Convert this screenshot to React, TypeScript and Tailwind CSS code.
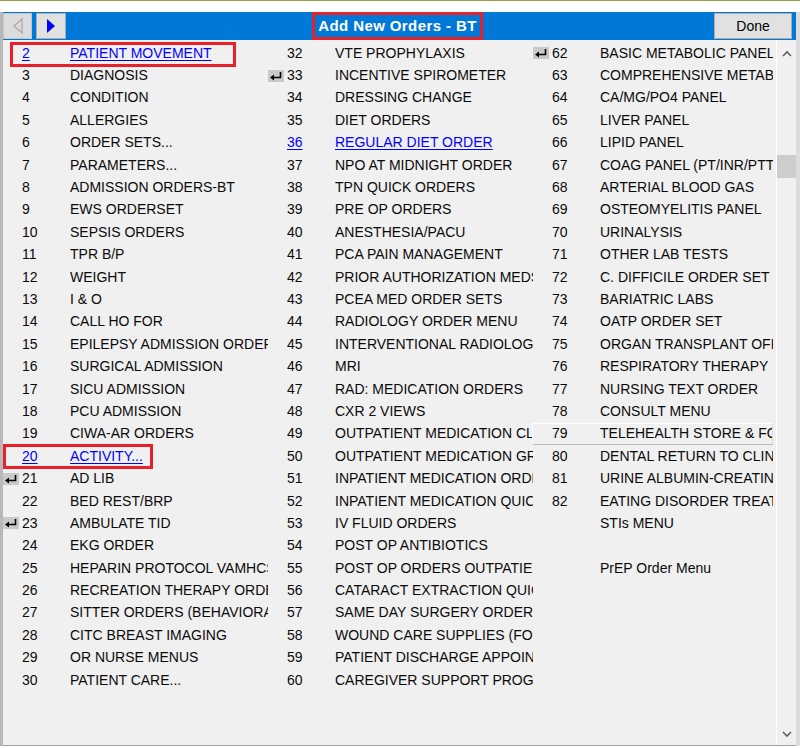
import React from 'react';

type Item = {
  num?: string;
  name: string;
  link?: boolean;
  icon?: boolean;
  focus?: boolean;
};

const col1: Item[] = [
  { num: '2', name: 'PATIENT MOVEMENT', link: true },
  { num: '3', name: 'DIAGNOSIS' },
  { num: '4', name: 'CONDITION' },
  { num: '5', name: 'ALLERGIES' },
  { num: '6', name: 'ORDER SETS...' },
  { num: '7', name: 'PARAMETERS...' },
  { num: '8', name: 'ADMISSION ORDERS-BT' },
  { num: '9', name: 'EWS ORDERSET' },
  { num: '10', name: 'SEPSIS ORDERS' },
  { num: '11', name: 'TPR B/P' },
  { num: '12', name: 'WEIGHT' },
  { num: '13', name: 'I & O' },
  { num: '14', name: 'CALL HO FOR' },
  { num: '15', name: 'EPILEPSY ADMISSION ORDERS' },
  { num: '16', name: 'SURGICAL ADMISSION' },
  { num: '17', name: 'SICU ADMISSION' },
  { num: '18', name: 'PCU ADMISSION' },
  { num: '19', name: 'CIWA-AR ORDERS' },
  { num: '20', name: 'ACTIVITY...', link: true },
  { num: '21', name: 'AD LIB', icon: true },
  { num: '22', name: 'BED REST/BRP' },
  { num: '23', name: 'AMBULATE TID', icon: true },
  { num: '24', name: 'EKG ORDER' },
  { num: '25', name: 'HEPARIN PROTOCOL VAMHCS' },
  { num: '26', name: 'RECREATION THERAPY ORDER' },
  { num: '27', name: 'SITTER ORDERS (BEHAVIORAL)' },
  { num: '28', name: 'CITC BREAST IMAGING' },
  { num: '29', name: 'OR NURSE MENUS' },
  { num: '30', name: 'PATIENT CARE...' },
];

const col2: Item[] = [
  { num: '32', name: 'VTE PROPHYLAXIS' },
  { num: '33', name: 'INCENTIVE SPIROMETER', icon: true },
  { num: '34', name: 'DRESSING CHANGE' },
  { num: '35', name: 'DIET ORDERS' },
  { num: '36', name: 'REGULAR DIET ORDER', link: true },
  { num: '37', name: 'NPO AT MIDNIGHT ORDER' },
  { num: '38', name: 'TPN QUICK ORDERS' },
  { num: '39', name: 'PRE OP ORDERS' },
  { num: '40', name: 'ANESTHESIA/PACU' },
  { num: '41', name: 'PCA PAIN MANAGEMENT' },
  { num: '42', name: 'PRIOR AUTHORIZATION MEDS' },
  { num: '43', name: 'PCEA MED ORDER SETS' },
  { num: '44', name: 'RADIOLOGY ORDER MENU' },
  { num: '45', name: 'INTERVENTIONAL RADIOLOGY' },
  { num: '46', name: 'MRI' },
  { num: '47', name: 'RAD: MEDICATION ORDERS' },
  { num: '48', name: 'CXR 2 VIEWS' },
  { num: '49', name: 'OUTPATIENT MEDICATION CLINIC' },
  { num: '50', name: 'OUTPATIENT MEDICATION GROUP' },
  { num: '51', name: 'INPATIENT MEDICATION ORDERS' },
  { num: '52', name: 'INPATIENT MEDICATION QUICK' },
  { num: '53', name: 'IV FLUID ORDERS' },
  { num: '54', name: 'POST OP ANTIBIOTICS' },
  { num: '55', name: 'POST OP ORDERS OUTPATIENT' },
  { num: '56', name: 'CATARACT EXTRACTION QUICK' },
  { num: '57', name: 'SAME DAY SURGERY ORDERS' },
  { num: '58', name: 'WOUND CARE SUPPLIES (FOR' },
  { num: '59', name: 'PATIENT DISCHARGE APPOINTMENT' },
  { num: '60', name: 'CAREGIVER SUPPORT PROGRAM' },
];

const col3: Item[] = [
  { num: '62', name: 'BASIC METABOLIC PANEL', icon: true },
  { num: '63', name: 'COMPREHENSIVE METABOLIC' },
  { num: '64', name: 'CA/MG/PO4 PANEL' },
  { num: '65', name: 'LIVER PANEL' },
  { num: '66', name: 'LIPID PANEL' },
  { num: '67', name: 'COAG PANEL (PT/INR/PTT)' },
  { num: '68', name: 'ARTERIAL BLOOD GAS' },
  { num: '69', name: 'OSTEOMYELITIS PANEL' },
  { num: '70', name: 'URINALYSIS' },
  { num: '71', name: 'OTHER LAB TESTS' },
  { num: '72', name: 'C. DIFFICILE ORDER SET' },
  { num: '73', name: 'BARIATRIC LABS' },
  { num: '74', name: 'OATP ORDER SET' },
  { num: '75', name: 'ORGAN TRANSPLANT OFFICE' },
  { num: '76', name: 'RESPIRATORY THERAPY' },
  { num: '77', name: 'NURSING TEXT ORDER' },
  { num: '78', name: 'CONSULT MENU' },
  { num: '79', name: 'TELEHEALTH STORE & FORWARD', focus: true },
  { num: '80', name: 'DENTAL RETURN TO CLINIC' },
  { num: '81', name: 'URINE ALBUMIN-CREATININE' },
  { num: '82', name: 'EATING DISORDER TREATMENT' },
  { name: 'STIs MENU' },
  { name: '' },
  { name: 'PrEP Order Menu' },
];

function ReturnIcon() {
  return (
    <svg width="16" height="12" viewBox="0 0 16 12" className="block">
      <rect width="16" height="12" fill="#c9c9c9" />
      <path d="M12.5 2 V7.5 H5" stroke="#000" strokeWidth="1.6" fill="none" />
      <polygon points="2,7.5 6,4.5 6,10.5" fill="#000" />
    </svg>
  );
}

function Column({ items, width }: { items: Item[]; width: string }) {
  return (
    <div className={`${width} shrink-0 flex flex-col`}>
      {items.map((item, i) => (
        <div
          key={i}
          className={`h-[22.4px] flex items-center ${
            item.focus ? 'border border-t-white border-l-white border-b-[#b9b9b9] border-r-[#d6d6d6] -ml-px' : ''
          }`}
        >
          <div className="w-[16px] shrink-0 flex items-center">{item.icon && <ReturnIcon />}</div>
          <div
            className={`w-[51px] shrink-0 pl-[3px] ${item.link ? 'text-[#0000ff] underline underline-offset-2' : ''}`}
          >
            {item.num}
          </div>
          <div
            className={`flex-1 min-w-0 overflow-hidden whitespace-nowrap ${
              item.link ? 'text-[#0000ff] underline underline-offset-2' : ''
            }`}
          >
            {item.name}
          </div>
        </div>
      ))}
    </div>
  );
}

export default function App() {
  return (
    <div
      className="relative w-[800px] h-[749px] overflow-hidden bg-white text-[14px] text-[#0a0a0a]"
      style={{ fontFamily: '"Liberation Sans", Arial, sans-serif' }}
    >
      {/* strip of the window behind */}
      <div className="h-[12px] border-t border-[#9c9c4c] bg-white" />

      <div className="flex flex-col h-[734px] border-l-[3px] border-[#b8b8b8] border-r-[4px] border-r-[#dcdcdc]">
        {/* title bar */}
        <div className="h-[28px] bg-[#0078d7] grid grid-cols-[1fr_auto_1fr] items-center">
          <div className="flex items-center gap-[4px] h-full">
            <button className="w-[29px] h-[26px] bg-[#dcdcdc] border border-[#c4c4c4] flex items-center justify-center">
              <svg width="10" height="16" viewBox="0 0 10 16">
                <polygon points="9,1 1,8 9,15" fill="none" stroke="#a8a8a8" strokeWidth="1.2" />
              </svg>
            </button>
            <button className="w-[30px] h-[26px] bg-[#e1e1e1] border border-[#adadad] flex items-center justify-center">
              <svg width="10" height="16" viewBox="0 0 10 16">
                <polygon points="1,1 9,8 1,15" fill="#0000ff" />
              </svg>
            </button>
          </div>
          <div className="h-[28px] flex items-center border-[3px] border-[#e8202a] px-[3px] -translate-x-[2px]">
            <span className="text-white font-bold text-[15px] tracking-[0.4px]">Add New Orders - BT</span>
          </div>
          <div className="flex justify-end h-full items-center pr-[4px]">
            <button className="w-[78px] h-[26px] bg-[#e1e1e1] border border-[#adadad] text-[14px] text-black">
              Done
            </button>
          </div>
        </div>

        {/* list */}
        <div className="relative flex flex-1 bg-[#f0f0f0] border-b border-[#a0a0a0]">
          <div className="flex pt-[2px] flex-1 min-w-0">
            <Column items={col1} width="w-[265px]" />
            <Column items={col2} width="w-[265px]" />
            <Column items={col3} width="w-[240px]" />
          </div>
          {/* scrollbar */}
          <div className="w-[20px] ml-[3px] shrink-0 border-l border-white flex flex-col">
            <div className="h-[26px] flex items-center justify-center">
              <svg width="10" height="7" viewBox="0 0 10 7">
                <polyline points="1,6 5,2 9,6" fill="none" stroke="#606060" strokeWidth="1.6" />
              </svg>
            </div>
            <div className="h-[89px]" />
            <div className="h-[23px] bg-[#cdcdcd]" />
            <div className="flex-1" />
            <div className="h-[22px] flex items-center justify-center">
              <svg width="10" height="7" viewBox="0 0 10 7">
                <polyline points="1,1 5,5 9,1" fill="none" stroke="#606060" strokeWidth="1.6" />
              </svg>
            </div>
          </div>

          {/* red annotation boxes */}
          <div className="absolute left-[7px] top-[2px] w-[226px] h-[25px] border-[3px] border-[#e8202a]" />
          <div className="absolute left-0 top-[404px] w-[150px] h-[25px] border-[3px] border-[#e8202a]" />
        </div>
      </div>
    </div>
  );
}
